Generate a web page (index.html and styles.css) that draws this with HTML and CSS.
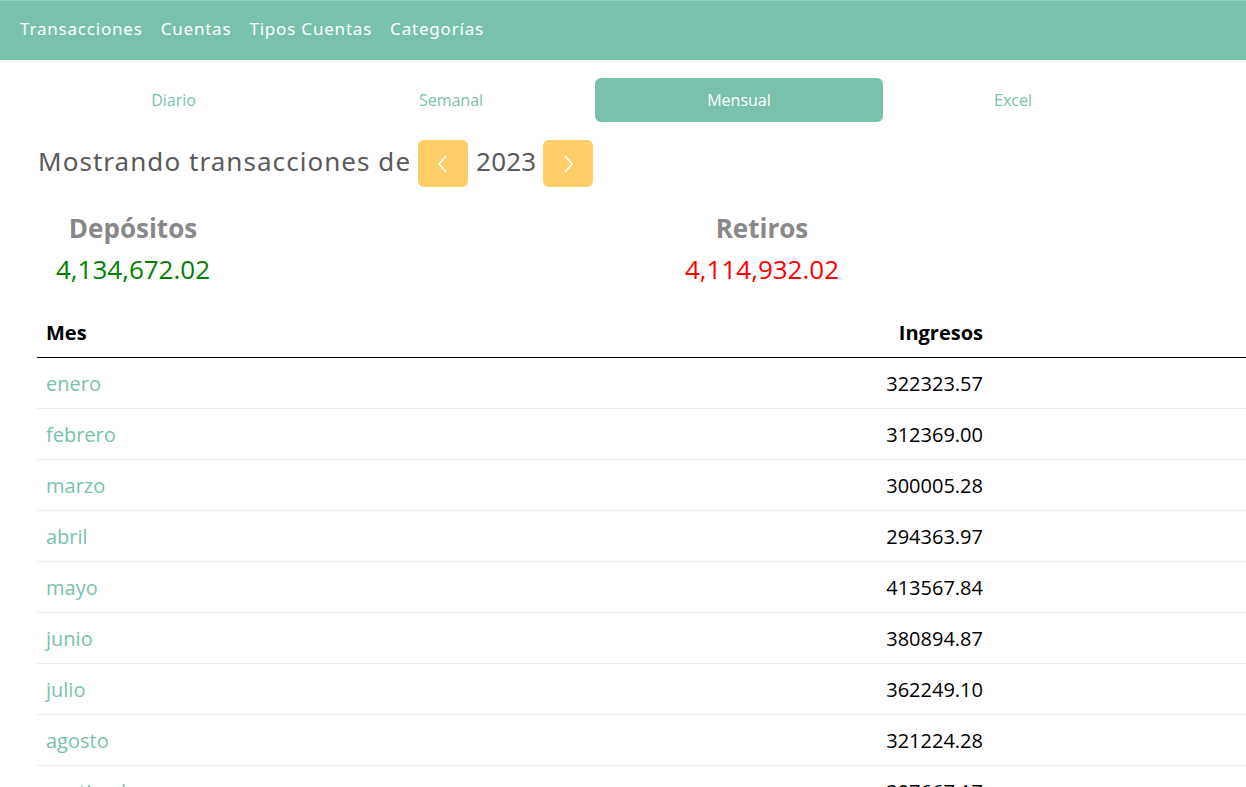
FILE: index.html
```html
<!DOCTYPE html>
<html lang="es">
<head>
<meta charset="utf-8">
<title>Transacciones</title>
<link rel="stylesheet" href="styles.css">
</head>
<body>
<nav class="navbar">
  <a class="nav-link">Transacciones</a>
  <a class="nav-link">Cuentas</a>
  <a class="nav-link">Tipos Cuentas</a>
  <a class="nav-link">Categorías</a>
</nav>
<main class="container">
  <ul class="tabs">
    <li class="tab tab-diario">Diario</li>
    <li class="tab tab-semanal">Semanal</li>
    <li class="tab tab-mensual active">Mensual</li>
    <li class="tab tab-excel">Excel</li>
  </ul>
  <div class="period">
    <span class="period-text">Mostrando transacciones de</span>
    <button class="arrow-btn" aria-label="anterior">
      <svg width="14" height="22" viewBox="0 0 14 22"><path d="M10 3 L3 11 L10 19" fill="none" stroke="#fff" stroke-width="1.6"/></svg>
    </button>
    <span class="period-text period-year">2023</span>
    <button class="arrow-btn" aria-label="siguiente">
      <svg width="14" height="22" viewBox="0 0 14 22"><path d="M4 3 L11 11 L4 19" fill="none" stroke="#fff" stroke-width="1.6"/></svg>
    </button>
  </div>
  <div class="totals">
    <div class="total">
      <div class="total-label">Depósitos</div>
      <div class="total-value deposit">4,134,672.02</div>
    </div>
    <div class="total">
      <div class="total-label">Retiros</div>
      <div class="total-value withdraw">4,114,932.02</div>
    </div>
  </div>
  <table class="months">
    <colgroup>
      <col class="col-mes">
      <col class="col-num">
      <col class="col-rest">
    </colgroup>
    <thead>
      <tr><th class="c-mes">Mes</th><th class="c-num">Ingresos</th><th class="c-rest"></th></tr>
    </thead>
    <tbody>
      <tr><td class="c-mes">enero</td><td class="c-num">322323.57</td><td class="c-rest"></td></tr>
      <tr><td class="c-mes">febrero</td><td class="c-num">312369.00</td><td class="c-rest"></td></tr>
      <tr><td class="c-mes">marzo</td><td class="c-num">300005.28</td><td class="c-rest"></td></tr>
      <tr><td class="c-mes">abril</td><td class="c-num">294363.97</td><td class="c-rest"></td></tr>
      <tr><td class="c-mes">mayo</td><td class="c-num">413567.84</td><td class="c-rest"></td></tr>
      <tr><td class="c-mes">junio</td><td class="c-num">380894.87</td><td class="c-rest"></td></tr>
      <tr><td class="c-mes">julio</td><td class="c-num">362249.10</td><td class="c-rest"></td></tr>
      <tr><td class="c-mes">agosto</td><td class="c-num">321224.28</td><td class="c-rest"></td></tr>
      <tr><td class="c-mes">septiembre</td><td class="c-num">307667.17</td><td class="c-rest"></td></tr>
    </tbody>
  </table>
</main>
</body>
</html>
```
FILE: styles.css
```css
html, body {
  margin: 0;
  padding: 0;
  overflow: hidden;
  background: #fff;
}
body {
  font-family: "Open Sans", "Noto Sans", sans-serif;
  color: #000;
}
.navbar {
  height: 60px;
  box-sizing: border-box;
  padding-bottom: 5px;
  background: #78c2ad;
  border-top: 1px solid #8fcfbd;
  display: flex;
  align-items: center;
  gap: 18px;
  padding-left: 20px;
  box-shadow: 0 1px 2px rgba(0,0,0,0.06);
}
.nav-link {
  font-family: "Noto Sans", sans-serif;
  font-size: 17px;
  color: #fff;
  letter-spacing: 0.8px;
}
.container {
  padding-left: 37px;
}
.tabs {
  list-style: none;
  margin: 18px 0 0 3px;
  padding: 0;
  display: flex;
  width: 1103px;
}
.tab {
  height: 44px;
  display: flex;
  align-items: center;
  justify-content: center;
  font-size: 16px;
  color: #78c2ad;
  border-radius: 6px;
}
.tab-diario { width: 267px; }
.tab-semanal { width: 288px; }
.tab-mensual { width: 288px; }
.tab-excel { width: 260px; }
.tab.active {
  background: #78c2ad;
  color: #fff;
}
.period {
  display: flex;
  align-items: center;
  margin-top: 18px;
  height: 47px;
  gap: 7px;
}
.period-text {
  font-family: "Noto Sans", sans-serif;
  font-size: 26px;
  letter-spacing: 1.05px;
  color: #5a5a5a;
  margin-left: 1px;
  padding-bottom: 5px;
}
.period-year {
  letter-spacing: 0.2px;
}
.arrow-btn {
  width: 50px;
  height: 47px;
  border: none;
  border-radius: 6px;
  background: #ffce67;
  display: flex;
  align-items: center;
  justify-content: center;
  padding: 0;
}
.totals {
  display: grid;
  grid-template-columns: 192px 192px;
  column-gap: 437px;
  margin-top: 24px;
}
.total {
  text-align: center;
}
.total-label {
  font-size: 26px;
  font-weight: 700;
  color: #888;
  line-height: 34px;
}
.total-value {
  font-size: 26px;
  line-height: 38px;
  margin-top: 5px;
}
.deposit { color: #008000; }
.withdraw { color: #ff0000; }
.months {
  margin-top: 20px;
  width: 1209px;
  table-layout: fixed;
  border-collapse: collapse;
  font-size: 20px;
}
.col-mes { width: 500px; }
.col-num { width: 455px; }
.col-rest { width: 254px; }
.months th {
  font-weight: 700;
  height: 49px;
  padding: 0 9px;
  border-bottom: 1px solid #000;
  vertical-align: middle;
}
.months td {
  height: 49px;
  padding: 1px 9px 0;
  border-bottom: 1px solid #eee;
  vertical-align: middle;
}
.c-mes {
  text-align: left;
}
td.c-mes { color: #78c2ad; }
.c-num {
  text-align: right;
}
```
